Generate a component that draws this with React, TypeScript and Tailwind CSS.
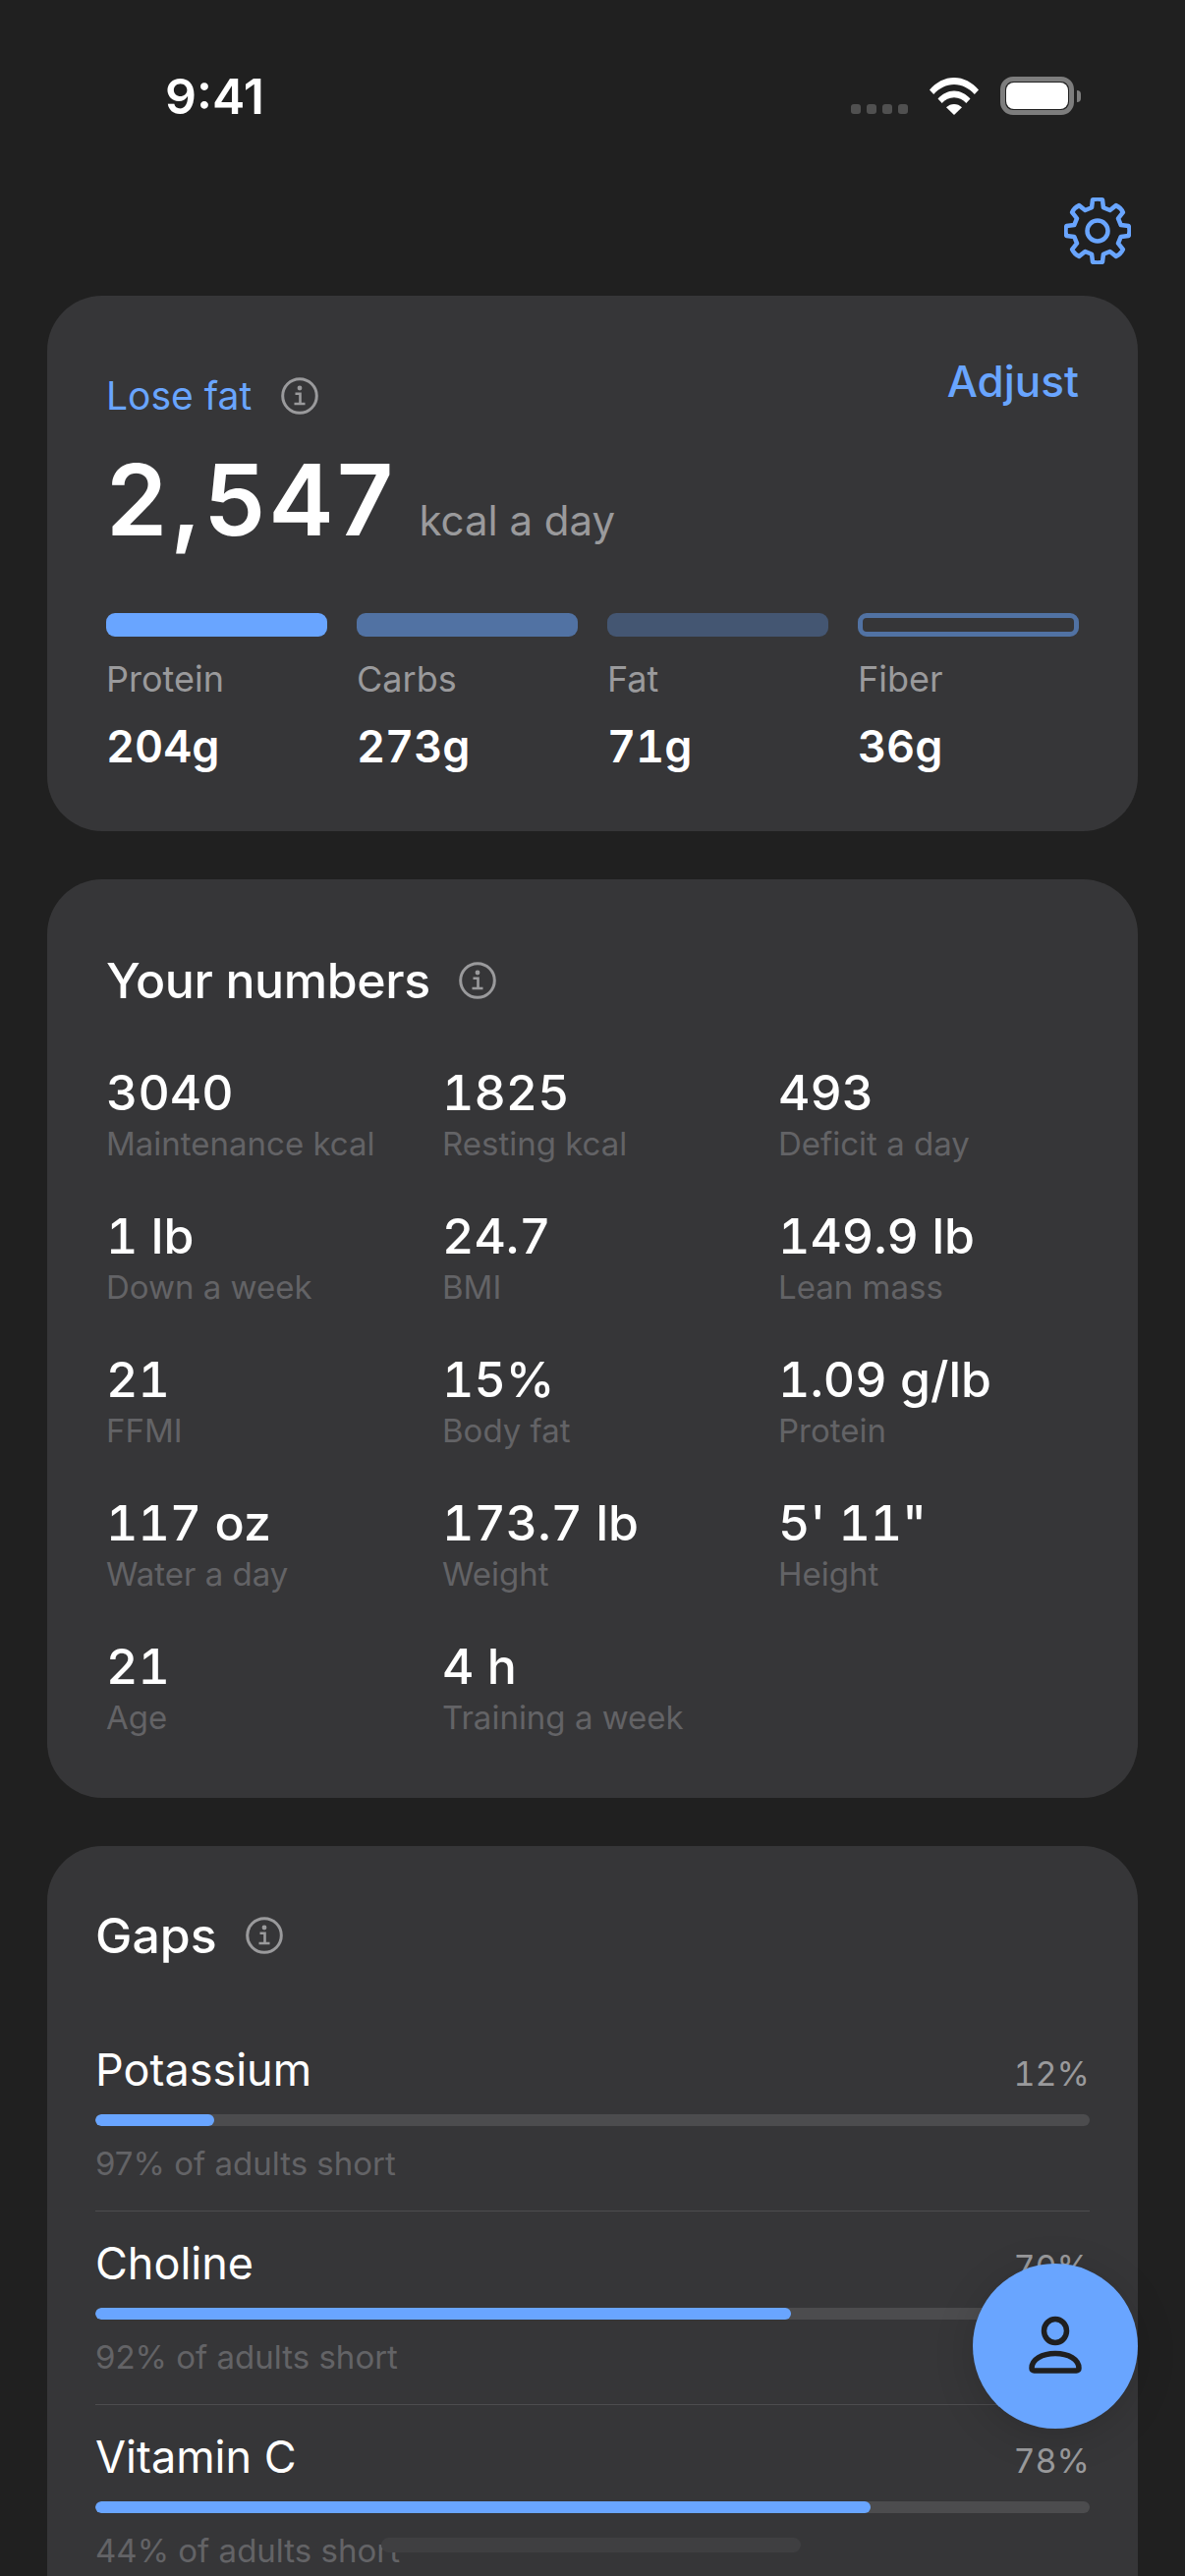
const macros = [
  { label: "Protein", value: "204g", bar: "bg-[#69a5ff]" },
  { label: "Carbs", value: "273g", bar: "bg-[#5172a3]" },
  { label: "Fat", value: "71g", bar: "bg-[#445672]" },
  { label: "Fiber", value: "36g", bar: "border-[5px] border-[#5172a3]" },
];

const numbers = [
  { value: "3040", label: "Maintenance kcal" },
  { value: "1825", label: "Resting kcal" },
  { value: "493", label: "Deficit a day" },
  { value: "1 lb", label: "Down a week" },
  { value: "24.7", label: "BMI" },
  { value: "149.9 lb", label: "Lean mass" },
  { value: "21", label: "FFMI" },
  { value: "15%", label: "Body fat" },
  { value: "1.09 g/lb", label: "Protein" },
  { value: "117 oz", label: "Water a day" },
  { value: "173.7 lb", label: "Weight" },
  { value: "5' 11\"", label: "Height" },
  { value: "21", label: "Age" },
  { value: "4 h", label: "Training a week" },
];

const gaps = [
  { name: "Potassium", pct: 12, note: "97% of adults short" },
  { name: "Choline", pct: 70, note: "92% of adults short" },
  { name: "Vitamin C", pct: 78, note: "44% of adults short" },
];

const gearPath = () => {
  const pts: string[] = [];
  const cx = 34;
  const cy = 34;
  const at = (r: number, deg: number) => {
    const a = ((deg - 90) * Math.PI) / 180;
    return `${(cx + r * Math.cos(a)).toFixed(2)} ${(cy + r * Math.sin(a)).toFixed(2)}`;
  };
  for (let i = 0; i < 8; i++) {
    const c = i * 45;
    pts.push(`${i === 0 ? "M" : "L"}${at(24.5, c - 14)}`);
    pts.push(`L${at(32, c - 9)}`);
    pts.push(`Q${at(33.5, c)} ${at(32, c + 9)}`);
    pts.push(`L${at(24.5, c + 14)}`);
  }
  return pts.join(" ") + "Z";
};

const Gear = () => (
  <svg width="68" height="68" viewBox="0 0 68 68" fill="none" stroke="#69a5ff" strokeWidth="4.5" strokeLinejoin="round">
    <path d={gearPath()} />
    <circle cx="34" cy="34" r="10.5" />
  </svg>
);

const InfoIcon = () => (
  <svg width="38" height="38" viewBox="0 0 38 38" fill="none" stroke="#9a9a9c" strokeWidth="3">
    <circle cx="19" cy="19" r="17.3" />
    <circle cx="19" cy="11" r="2.400" fill="#9a9a9c" stroke="none" />
    <path d="M14.500 16.800h5v10M13.500 27h11" strokeWidth="2.600" />
  </svg>
);

const StatusBar = () => (
  <div className="flex justify-between pl-[168px] pr-[106px] pt-[75px]">
    <span className="text-[50px] leading-[46px] font-semibold text-white">9:41</span>
    <div className="flex items-end gap-[22px] h-[42px]">
      <div className="flex gap-[6px] pb-[1px]">
        <div className="w-[10px] h-[10px] rounded-[3px] bg-[#505050]" />
        <div className="w-[10px] h-[10px] rounded-[3px] bg-[#505050]" />
        <div className="w-[10px] h-[10px] rounded-[3px] bg-[#505050]" />
        <div className="w-[10px] h-[10px] rounded-[3px] bg-[#505050]" />
      </div>
      <svg width="50" height="38" viewBox="0 0 50 38" fill="#fff">
        <path d="M0 12.5C6.5 4.8 15.5 0 25 0s18.500 4.800 25 12.500l-4.200 4.600C40.200 10.800 33 7 25 7S9.800 10.800 4.200 17.100z" />
        <path d="M8.500 21.500C13 16.500 18.800 13.500 25 13.500s12 3 16.500 8l-4.200 4.500C34 22.500 29.800 20.300 25 20.300s-9 2.200-12.300 5.700z" />
        <path d="M17 30.300c2.200-2.100 5-3.300 8-3.300s5.800 1.200 8 3.300L25 38z" />
      </svg>
      <div className="flex items-center gap-[3px]">
        <div className="w-[75px] h-[39px] rounded-[13px] border-[5px] border-[#7d7d7d] p-[1px]">
          <div className="w-full h-full rounded-[8px] bg-white" />
        </div>
        <div className="w-[4px] h-[12px] rounded-r-full bg-[#7d7d7d]" />
      </div>
    </div>
  </div>
);

const GoalCard = () => (
  <div className="rounded-[56px] bg-[#363638] h-[545px] px-[60px] pt-[68px]">
    <div className="flex justify-between items-start h-[66px]">
      <div className="flex items-center gap-[30px] pt-[15px]">
        <span className="text-[39px] leading-[38px] text-[#69a5ff]">Lose fat</span>
        <InfoIcon />
      </div>
      <span className="text-[44px] leading-[38px] font-medium text-[#69a5ff]">Adjust</span>
    </div>
    <div className="flex items-baseline gap-[23px] mt-[24px]">
      <span className="text-[100px] leading-[100px] font-semibold text-white tracking-[3px]">2,547</span>
      <span className="text-[42px] leading-[48px] text-[#9a9a9c]">kcal a day</span>
    </div>
    <div className="grid grid-cols-4 gap-[30px] mt-[65px]">
      {macros.map(m => (
        <div key={m.label}>
          <div className={`h-[24px] rounded-[9px] ${m.bar}`} />
          <div className="text-[36px] leading-[44px] text-[#9a9a9c] mt-[21px]">{m.label}</div>
          <div className="text-[45px] leading-[52px] font-semibold tabular-nums text-white mt-[21px]">{m.value}</div>
        </div>
      ))}
    </div>
  </div>
);

const NumbersCard = () => (
  <div className="rounded-[56px] bg-[#363638] h-[935px] pl-[60px] pt-[78px] mt-[49px]">
    <div className="flex items-center gap-[29px] h-[50px]">
      <span className="text-[50px] leading-[50px] font-medium tracking-[-0.4px] text-white">Your numbers</span>
      <InfoIcon />
    </div>
    <div className="grid grid-cols-[342px_342px_1fr] mt-[61px]">
      {numbers.map(n => (
        <div key={n.label + n.value} className="h-[146px]">
          <div className="text-[50px] leading-[56px] font-medium tabular-nums text-white">{n.value}</div>
          <div className="text-[33px] leading-[40px] text-[#636366] mt-[4px]">{n.label}</div>
        </div>
      ))}
    </div>
  </div>
);

const GapsCard = () => (
  <div className="rounded-t-[56px] bg-[#363638] h-[900px] px-[49px] pt-[66px] mt-[49px]">
    <div className="flex items-center gap-[29px] h-[50px]">
      <span className="text-[50px] leading-[50px] font-medium text-white">Gaps</span>
      <InfoIcon />
    </div>
    <div className="mt-[87px]">
      {gaps.map(g => (
        <div key={g.name} className="h-[169px] mb-[28px] border-b border-[#4d4d4f] last:border-b-0">
          <div className="flex justify-between items-baseline h-[50px]">
            <span className="text-[45px] leading-[50px] font-normal text-white">{g.name}</span>
            <span className="text-[34px] leading-[40px] tabular-nums text-[#9a9a9c]">{g.pct}%</span>
          </div>
          <div className="h-[12px] rounded-full bg-[#4c4c4e] mt-[20px] overflow-hidden">
            <div className="h-full rounded-full bg-[#69a5ff]" style={{ width: `${g.pct}%` }} />
          </div>
          <div className="text-[33px] leading-[40px] text-[#636366] mt-[18px]">{g.note}</div>
        </div>
      ))}
    </div>
  </div>
);

export default function App() {
  return (
    <div className="relative w-[1206px] h-[2622px] overflow-hidden bg-[#202020] font-['Inter',sans-serif]">
      <StatusBar />
      <div className="flex justify-end pr-[55px] mt-[80px]">
        <Gear />
      </div>
      <div className="px-[48px] mt-[32px]">
        <GoalCard />
        <NumbersCard />
        <GapsCard />
      </div>

      <div className="absolute left-[990px] top-[2304px] w-[168px] h-[168px] rounded-full bg-[#69a5ff] shadow-[0_8px_40px_rgba(0,0,0,0.15)] flex items-center justify-center">
        <svg width="60" height="62" viewBox="0 0 60 62" fill="none" stroke="#1f1f1f" strokeWidth="5.500">
          <ellipse cx="30" cy="15.500" rx="11.500" ry="12" />
          <path d="M6 53.500c0-9 10.500-15 24-15s24 6 24 15c0 1.500-1 2.500-2.500 2.500h-43C7 56 6 55 6 53.500z" strokeLinejoin="round" />
        </svg>
      </div>
      <div className="absolute left-[388px] top-[2583px] w-[427px] h-[15px] rounded-full bg-[#3f3f41]" />
    </div>
  );
}
